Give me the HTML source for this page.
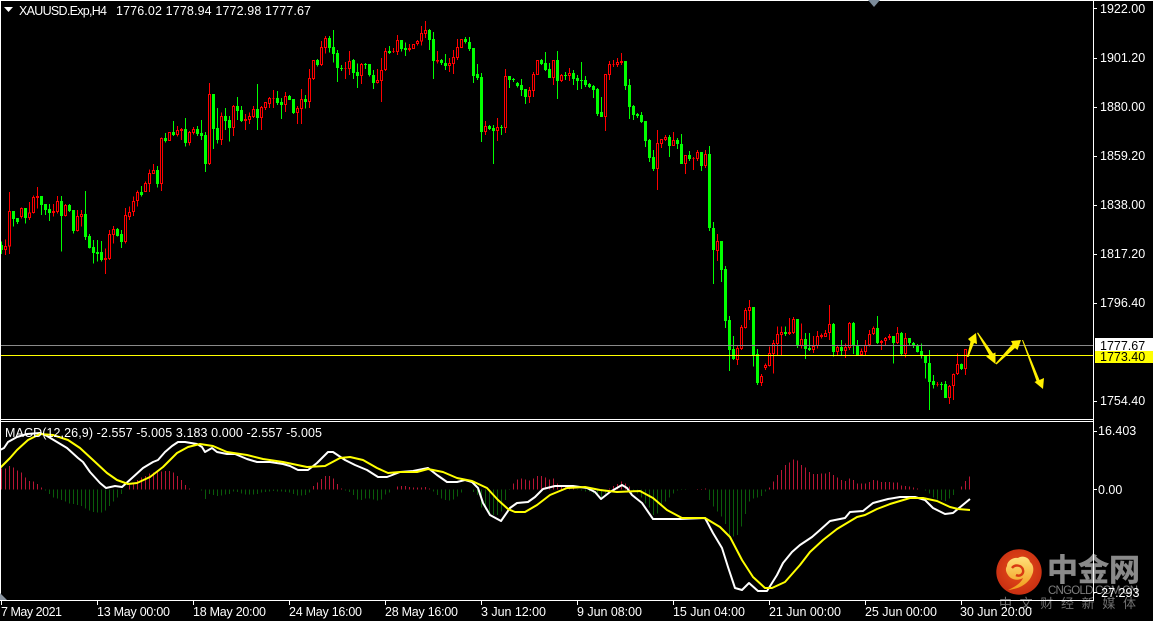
<!DOCTYPE html>
<html><head><meta charset="utf-8"><title>XAUUSD</title>
<style>
html,body{margin:0;padding:0;background:#000;width:1153px;height:621px;overflow:hidden}
svg{display:block}
text{font-family:"Liberation Sans","Noto Sans CJK SC",sans-serif;font-size:12.5px;fill:#fff}
</style></head>
<body>
<svg width="1153" height="621" viewBox="0 0 1153 621" xmlns="http://www.w3.org/2000/svg">
<defs>
<radialGradient id="lg" cx="50%" cy="45%" r="55%"><stop offset="0" stop-color="#e8501a"/><stop offset="1" stop-color="#c92f12"/></radialGradient>
<linearGradient id="ly" x1="0" y1="0" x2="0" y2="1"><stop offset="0" stop-color="#ffe07a"/><stop offset="1" stop-color="#f09a18"/></linearGradient>
</defs>
<rect width="1153" height="621" fill="#000"/>
<g transform="scale(.33333)" shape-rendering="crispEdges" fill="none">
<path stroke="#0f0" stroke-width="3" d="M4.5 725V762M40.5 633V680M52.5 654V672M76.5 624V670M124.5 588V645M136.5 612V645M148.5 612V663M184.5 588V755M208.5 612V636M220.5 630V700M256.5 573V720M268.5 702V745M280.5 720V790M292.5 720V785M304.5 723V785M352.5 684V710M364.5 690V744M424.5 558V590M472.5 498V563M496.5 399V428M520.5 363V408M556.5 354V440M592.5 378V408M604.5 360V420M616.5 396V516M640.5 282V447M652.5 324V430M676.5 324V390M688.5 348V425M712.5 291V360M724.5 318V366M772.5 252V390M832.5 273V315M844.5 294V357M868.5 285V300M880.5 297V342M916.5 285V325M952.5 177V200M988.5 108V158M1000.5 90V188M1012.5 150V246M1024.5 195V213M1060.5 177V237M1072.5 190V264M1096.5 189V207M1108.5 192V230M1120.5 210V267M1168.5 138V162M1204.5 120V155M1216.5 128V168M1288.5 87V150M1300.5 96V237M1324.5 177V195M1336.5 162V210M1396.5 111V130M1408.5 111V153M1420.5 144V249M1432.5 192V240M1444.5 219V426M1468.5 375V390M1480.5 375V492M1504.5 375V405M1528.5 228V264M1540.5 234V246M1552.5 246V262M1564.5 237V288M1576.5 267V312M1624.5 177V195M1636.5 156V213M1648.5 189V234M1672.5 153V297M1696.5 216V240M1720.5 210V255M1732.5 225V270M1744.5 186V267M1756.5 228V261M1768.5 249V264M1780.5 255V294M1792.5 264V348M1804.5 291V351M1876.5 183V270M1888.5 237V357M1900.5 315V360M1912.5 339V354M1924.5 336V369M1936.5 363V441M1948.5 417V486M1960.5 450V513M2008.5 405V471M2032.5 414V447M2044.5 402V492M2068.5 453V483M2104.5 456V513M2128.5 438V693M2140.5 666V852M2164.5 723V846M2176.5 798V984M2188.5 948V1113M2200.5 1008V1080M2260.5 921V1100M2272.5 1047V1155M2356.5 980V1008M2392.5 957V1044M2416.5 999V1077M2428.5 999V1053M2500.5 969V1070M2524.5 1020V1068M2560.5 966V1062M2572.5 1020V1068M2632.5 948V1032M2680.5 1008V1090M2704.5 996V1065M2728.5 1014V1038M2740.5 1026V1044M2752.5 1032V1058M2764.5 1030V1076M2776.5 1065V1135M2788.5 1050V1230M2800.5 1125V1165M2824.5 1146V1170M2836.5 1143V1194M2884.5 1090V1110"/>
<path stroke="#0f0" stroke-width="9" d="M4.5 735V750M40.5 633V657M52.5 654V666M76.5 624V654M124.5 588V615M136.5 612V630M148.5 627V639M184.5 603V648M208.5 615V633M220.5 630V693M256.5 642V711M268.5 708V744M280.5 741V759M292.5 756V762M304.5 756V780M352.5 687V708M364.5 702V726M424.5 576V585M472.5 510V552M496.5 414V423M520.5 396V405M556.5 387V429M592.5 387V402M604.5 399V408M616.5 405V492M640.5 282V387M652.5 384V420M676.5 348V363M688.5 360V384M712.5 318V333M724.5 330V363M772.5 327V354M832.5 294V309M844.5 306V315M868.5 288V300M880.5 297V339M916.5 297V306M952.5 180V195M988.5 114V144M1000.5 141V162M1012.5 159V204M1024.5 204V207M1060.5 180V219M1072.5 216V228M1096.5 192V195M1108.5 192V225M1120.5 225V249M1168.5 153V159M1204.5 120V147M1216.5 144V150M1288.5 90V120M1300.5 117V183M1324.5 180V189M1336.5 189V198M1396.5 117V126M1408.5 126V147M1420.5 144V228M1432.5 222V234M1444.5 231V396M1468.5 378V387M1480.5 384V393M1504.5 381V384M1528.5 228V240M1540.5 237V240M1552.5 249V258M1564.5 255V270M1576.5 267V291M1624.5 180V192M1636.5 189V210M1648.5 207V234M1672.5 180V243M1696.5 225V228M1720.5 219V237M1732.5 234V243M1744.5 240V243M1756.5 240V255M1768.5 252V261M1780.5 258V270M1792.5 267V342M1804.5 336V351M1876.5 183V258M1888.5 255V321M1900.5 318V345M1912.5 342V348M1924.5 345V366M1936.5 363V423M1948.5 420V474M1960.5 471V507M2008.5 411V438M2032.5 420V432M2044.5 432V492M2068.5 465V477M2104.5 456V498M2128.5 462V684M2140.5 684V750M2164.5 723V810M2176.5 807V963M2188.5 960V1050M2200.5 1047V1077M2260.5 921V1065M2272.5 1062V1149M2356.5 996V1002M2392.5 957V1038M2416.5 1017V1047M2428.5 1044V1050M2500.5 972V1056M2524.5 1041V1053M2560.5 969V1038M2572.5 1035V1065M2632.5 984V1029M2680.5 1008V1029M2704.5 999V1062M2728.5 1014V1029M2740.5 1029V1038M2752.5 1035V1056M2764.5 1053V1068M2776.5 1068V1089M2788.5 1089V1146M2800.5 1143V1155M2824.5 1152V1155M2836.5 1152V1194M2884.5 1092V1107"/>
<path stroke="#f00" stroke-width="3" d="M16.5 718V765M28.5 576V762M64.5 622V655M88.5 606V660M100.5 586V640M112.5 561V625M160.5 612V650M172.5 588V640M196.5 612V650M232.5 630V695M244.5 630V680M316.5 745V822M328.5 690V780M340.5 678V730M376.5 624V730M388.5 620V660M400.5 590V648M412.5 572V620M436.5 545V576M448.5 508V576M460.5 492V522M484.5 413V573M508.5 396V423M532.5 378V410M544.5 384V420M568.5 393V436M580.5 381V403M628.5 249V495M664.5 337V435M700.5 315V408M736.5 342V390M748.5 338V372M760.5 318V354M784.5 318V390M796.5 306V330M808.5 291V324M820.5 270V324M856.5 276V336M892.5 318V372M904.5 267V372M928.5 207V324M940.5 180V240M964.5 123V198M976.5 108V160M1036.5 186V237M1048.5 153V225M1084.5 189V252M1132.5 207V250M1144.5 174V306M1156.5 144V213M1180.5 144V159M1192.5 105V165M1228.5 132V155M1240.5 132V147M1252.5 120V137M1264.5 78V137M1276.5 63V114M1312.5 153V190M1348.5 174V216M1360.5 150V222M1372.5 117V180M1384.5 117V144M1456.5 363V405M1492.5 354V423M1516.5 207V399M1588.5 261V309M1600.5 216V291M1612.5 180V225M1660.5 180V255M1684.5 222V246M1708.5 204V243M1816.5 222V393M1828.5 183V240M1840.5 180V201M1852.5 174V201M1864.5 159V195M1972.5 390V570M1984.5 417V444M1996.5 405V423M2020.5 396V438M2056.5 465V522M2080.5 471V510M2092.5 450V483M2116.5 450V504M2152.5 702V783M2212.5 1038V1095M2224.5 975V1050M2236.5 924V985M2248.5 900V960M2284.5 1122V1158M2296.5 1090V1110M2308.5 1040V1100M2320.5 1020V1120M2332.5 980V1065M2344.5 980V1068M2368.5 954V1005M2380.5 951V1002M2404.5 970V1045M2440.5 1008V1059M2452.5 993V1045M2464.5 1000V1015M2476.5 990V1010M2488.5 915V1020M2512.5 1035V1065M2536.5 1030V1074M2548.5 966V1050M2584.5 1045V1068M2596.5 1020V1065M2608.5 990V1040M2620.5 980V1005M2644.5 1020V1050M2656.5 1011V1035M2668.5 1002V1020M2692.5 981V1032M2716.5 999V1072M2812.5 1146V1160M2848.5 1155V1212M2860.5 1120V1200M2872.5 1060V1125M2896.5 1047V1125"/>
<path stroke="#f00" stroke-width="3" fill="#000" d="M13.5 739.5h6v9h-6zM25.5 634.5h6v104h-6zM61.5 625.5h6v24h-6zM85.5 638.5h6v14h-6zM97.5 592.5h6v45h-6zM109.5 589.5h6v3h-6zM157.5 634.5h6v3h-6zM169.5 604.5h6v30h-6zM193.5 616.5h6v30h-6zM229.5 649.5h6v42h-6zM241.5 643.5h6v6h-6zM313.5 775.5h6v3h-6zM325.5 703.5h6v72h-6zM337.5 688.5h6v15h-6zM373.5 646.5h6v78h-6zM385.5 637.5h6v12h-6zM397.5 604.5h6v30h-6zM409.5 577.5h6v24h-6zM433.5 550.5h6v24h-6zM445.5 520.5h6v30h-6zM457.5 511.5h6v9h-6zM481.5 415.5h6v135h-6zM505.5 397.5h6v24h-6zM529.5 391.5h6v12h-6zM541.5 388.5h6v3h-6zM565.5 397.5h6v30h-6zM577.5 388.5h6v9h-6zM625.5 283.5h6v207h-6zM661.5 349.5h6v69h-6zM697.5 319.5h6v63h-6zM733.5 358.5h6v3h-6zM745.5 349.5h6v9h-6zM757.5 328.5h6v21h-6zM781.5 322.5h6v30h-6zM793.5 307.5h6v15h-6zM805.5 295.5h6v15h-6zM817.5 295.5h6v0h-6zM853.5 289.5h6v24h-6zM889.5 325.5h6v12h-6zM901.5 298.5h6v27h-6zM925.5 235.5h6v69h-6zM937.5 181.5h6v54h-6zM961.5 142.5h6v51h-6zM973.5 115.5h6v27h-6zM1033.5 205.5h6v0h-6zM1045.5 184.5h6v21h-6zM1081.5 193.5h6v33h-6zM1129.5 241.5h6v6h-6zM1141.5 211.5h6v30h-6zM1153.5 154.5h6v54h-6zM1177.5 154.5h6v0h-6zM1189.5 121.5h6v33h-6zM1225.5 145.5h6v3h-6zM1237.5 133.5h6v12h-6zM1249.5 124.5h6v6h-6zM1261.5 100.5h6v23h-6zM1273.5 91.5h6v9h-6zM1309.5 181.5h6v1h-6zM1345.5 190.5h6v6h-6zM1357.5 172.5h6v18h-6zM1369.5 142.5h6v30h-6zM1381.5 118.5h6v24h-6zM1453.5 379.5h6v15h-6zM1489.5 382.5h6v9h-6zM1513.5 229.5h6v153h-6zM1585.5 271.5h6v18h-6zM1597.5 223.5h6v48h-6zM1609.5 181.5h6v42h-6zM1657.5 181.5h6v51h-6zM1681.5 226.5h6v15h-6zM1705.5 220.5h6v6h-6zM1813.5 223.5h6v126h-6zM1825.5 193.5h6v30h-6zM1837.5 193.5h6v0h-6zM1849.5 187.5h6v6h-6zM1861.5 184.5h6v3h-6zM1969.5 430.5h6v75h-6zM1981.5 418.5h6v12h-6zM1993.5 412.5h6v6h-6zM2017.5 421.5h6v15h-6zM2053.5 466.5h6v24h-6zM2077.5 475.5h6v0h-6zM2089.5 457.5h6v18h-6zM2113.5 463.5h6v33h-6zM2149.5 724.5h6v27h-6zM2209.5 1045.5h6v33h-6zM2221.5 982.5h6v63h-6zM2233.5 931.5h6v51h-6zM2245.5 922.5h6v9h-6zM2281.5 1129.5h6v18h-6zM2293.5 1096.5h6v6h-6zM2305.5 1060.5h6v36h-6zM2317.5 1030.5h6v30h-6zM2329.5 1003.5h6v27h-6zM2341.5 997.5h6v6h-6zM2365.5 997.5h6v3h-6zM2377.5 958.5h6v39h-6zM2401.5 1018.5h6v18h-6zM2437.5 1039.5h6v9h-6zM2449.5 1009.5h6v27h-6zM2461.5 1006.5h6v3h-6zM2473.5 1000.5h6v9h-6zM2485.5 973.5h6v24h-6zM2509.5 1042.5h6v12h-6zM2533.5 1042.5h6v9h-6zM2545.5 970.5h6v72h-6zM2581.5 1054.5h6v9h-6zM2593.5 1036.5h6v18h-6zM2605.5 1003.5h6v30h-6zM2617.5 985.5h6v15h-6zM2641.5 1024.5h6v3h-6zM2653.5 1015.5h6v6h-6zM2665.5 1009.5h6v3h-6zM2689.5 1000.5h6v27h-6zM2713.5 1015.5h6v45h-6zM2809.5 1153.5h6v0h-6zM2845.5 1159.5h6v33h-6zM2857.5 1123.5h6v33h-6zM2869.5 1093.5h6v27h-6zM2893.5 1048.5h6v57h-6z"/>
</g>
<rect x="0" y="345" width="1093" height="1" fill="#8a8a8a"/>
<rect x="0" y="355" width="1093" height="1" fill="#ffff00"/>
<g fill="#ffef00">
<polygon points="967,357 968.5,357 974,343 977,344 976,333 968,339 970.5,341.5"/>
<polygon points="977,333 978,332.5 993,353.5 995.5,352.5 995.5,364 986,356.5 989.5,355.5"/>
<polygon points="995.5,363.5 996.5,364.5 1015,348 1017.5,350 1021,340 1011,341 1012.5,344"/>
<polygon points="1022,340 1023,340 1039.5,380 1044,378 1043,389 1034.5,382 1036.5,381"/>
</g>
<g transform="scale(.33333) translate(0,1260)" shape-rendering="crispEdges" fill="none" stroke-width="3">
<path stroke="#b81535" d="M4.5 208V145M16.5 208V145M28.5 208V138M40.5 208V142M52.5 208V152M64.5 208V158M76.5 208V172M88.5 208V183M100.5 208V185M112.5 208V192M124.5 208V202M388.5 208V195M400.5 208V190M412.5 208V180M424.5 208V172M436.5 208V168M448.5 208V160M460.5 208V158M472.5 208V155M484.5 208V155M496.5 208V153M508.5 208V153M520.5 208V158M532.5 208V168M544.5 208V180M556.5 208V195M568.5 208V205M940.5 208V198M952.5 208V188M964.5 208V177M976.5 208V168M988.5 208V168M1000.5 208V175M1012.5 208V192M1024.5 208V205M1192.5 208V200M1204.5 208V198M1216.5 208V198M1228.5 208V201M1240.5 208V202M1252.5 208V203M1264.5 208V202M1276.5 208V201M1288.5 208V205M1540.5 208V190M1552.5 208V178M1564.5 208V175M1576.5 208V178M1588.5 208V182M1600.5 208V175M1612.5 208V168M1624.5 208V168M1636.5 208V172M1648.5 208V178M1660.5 208V175M1672.5 208V190M1684.5 208V195M1696.5 208V198M1708.5 208V200M1720.5 208V203M1828.5 208V205M1840.5 208V198M1852.5 208V192M1864.5 208V185M1876.5 208V190M1888.5 208V200M2092.5 208V207M2104.5 208V207M2116.5 208V206M2308.5 208V203M2320.5 208V185M2332.5 208V165M2344.5 208V150M2356.5 208V135M2368.5 208V128M2380.5 208V118M2392.5 208V122M2404.5 208V135M2416.5 208V142M2428.5 208V156M2440.5 208V162M2452.5 208V162M2464.5 208V160M2476.5 208V160M2488.5 208V156M2500.5 208V165M2512.5 208V172M2524.5 208V180M2536.5 208V183M2548.5 208V175M2560.5 208V180M2572.5 208V190M2584.5 208V190M2596.5 208V190M2608.5 208V186M2620.5 208V180M2632.5 208V182M2644.5 208V186M2656.5 208V186M2668.5 208V186M2680.5 208V188M2692.5 208V188M2704.5 208V196M2716.5 208V198M2728.5 208V200M2740.5 208V203M2752.5 208V205M2884.5 208V200M2896.5 208V183M2908.5 208V170"/>
<path stroke="#0a5c0a" d="M136.5 208V212M148.5 208V222M160.5 208V232M172.5 208V235M184.5 208V240M196.5 208V245M208.5 208V250M220.5 208V252M232.5 208V255M244.5 208V258M256.5 208V265M268.5 208V272M280.5 208V276M292.5 208V278M304.5 208V277M316.5 208V272M328.5 208V258M340.5 208V245M352.5 208V232M364.5 208V222M604.5 208V212M616.5 208V237M628.5 208V222M640.5 208V225M652.5 208V228M664.5 208V226M676.5 208V224M688.5 208V222M700.5 208V215M712.5 208V216M724.5 208V220M736.5 208V224M748.5 208V224M760.5 208V224M772.5 208V222M784.5 208V218M796.5 208V216M808.5 208V214M820.5 208V213M832.5 208V214M844.5 208V215M856.5 208V216M868.5 208V218M880.5 208V222M892.5 208V226M904.5 208V226M916.5 208V225M928.5 208V218M1036.5 208V212M1048.5 208V216M1060.5 208V225M1072.5 208V238M1084.5 208V240M1096.5 208V236M1108.5 208V236M1120.5 208V238M1132.5 208V242M1144.5 208V238M1156.5 208V224M1168.5 208V218M1300.5 208V215M1312.5 208V225M1324.5 208V235M1336.5 208V240M1348.5 208V242M1360.5 208V238M1372.5 208V230M1384.5 208V218M1420.5 208V216M1432.5 208V225M1444.5 208V262M1456.5 208V268M1468.5 208V280M1480.5 208V285M1492.5 208V285M1504.5 208V275M1516.5 208V240M1528.5 208V210M1732.5 208V210M1744.5 208V212M1756.5 208V215M1768.5 208V215M1780.5 208V220M1792.5 208V225M1804.5 208V235M1816.5 208V222M1900.5 208V212M1912.5 208V220M1924.5 208V232M1936.5 208V250M1948.5 208V262M1960.5 208V285M1972.5 208V280M1984.5 208V258M1996.5 208V245M2008.5 208V232M2020.5 208V220M2032.5 208V212M2044.5 208V210M2056.5 208V210M2068.5 208V209M2128.5 208V240M2140.5 208V260M2152.5 208V275M2164.5 208V290M2176.5 208V312M2188.5 208V345M2200.5 208V350M2212.5 208V345M2224.5 208V320M2236.5 208V282M2248.5 208V245M2260.5 208V235M2272.5 208V232M2284.5 208V228M2296.5 208V215M2776.5 208V212M2788.5 208V220M2800.5 208V232M2812.5 208V238M2824.5 208V240M2836.5 208V243M2848.5 208V235M2860.5 208V225"/>
</g>
<polyline fill="none" stroke="#fff" stroke-width="2" stroke-linejoin="round" points="0,450 4,448 8,442 17,437 27,434 40,433 47,436 57,442 67,448 78,458 83,462 90,472 100,483 106,488 115,486 122,487 132,478 143,468 153,462 158,460 165,452 172,446 178,442 185,442 197,444 202,447 205,452 212,448 217,452 227,454 235,454 247,459 257,462 270,462 283,464 290,466 298,470 308,470 317,463 328,452 333,452 345,460 355,465 367,470 378,477 387,477 400,472 413,471 428,468 437,475 447,482 457,482 465,480 472,482 478,488 483,503 490,515 501,521 510,508 517,503 528,502 535,497 543,489 555,486 573,486 587,488 595,492 601,499 610,492 622,485 627,488 632,495 642,503 653,519 673,519 680,519 705,518 713,533 722,548 728,567 735,588 742,590 749,583 758,591 767,591 777,575 783,563 792,552 800,545 812,537 820,530 830,521 845,518 850,512 863,511 873,503 888,499 900,497 915,497 925,500 933,508 945,514 953,513 970,499"/>
<polyline fill="none" stroke="#ff0" stroke-width="2" stroke-linejoin="round" points="0,468 10,458 17,450 28,440 40,434 53,435 68,440 80,448 93,460 107,473 117,480 128,484 137,483 150,477 163,467 177,453 188,447 200,444 213,446 227,452 247,455 263,459 283,462 307,467 325,466 340,458 350,457 363,460 377,468 388,473 400,472 417,472 428,469 443,472 457,478 472,481 487,488 498,500 508,509 515,512 525,512 537,505 550,495 567,488 585,487 600,490 617,492 640,491 653,498 667,510 682,518 705,518 720,527 730,537 742,560 753,577 765,588 772,588 785,582 800,565 810,552 823,540 837,529 857,517 865,515 877,509 890,504 910,498 923,498 937,501 950,507 958,509 970,510"/>
<circle cx="1019" cy="572" r="22.7" fill="url(#lg)"/>
<path d="M1007 566c0-5 6-9 11-8c4-3 11-1 12 4c4 3 4 9 2 13c-3 8-12 14-24 15c7-3 13-7 15-12c-5 3-12 2-15-3c-2-3-3-6-1-9z" fill="url(#ly)"/>
<path d="M1012 568c3-4 10-3 11 2c1 4-3 7-7 5" fill="none" stroke="#d83a12" stroke-width="2.4"/>
<text x="1047" y="581" style="font-family:'Noto Sans CJK SC',sans-serif;font-size:31px;font-weight:700;fill:#8a8a8a;stroke:#8a8a8a;stroke-width:.5">中金网</text>
<text x="1048" y="594" textLength="90" style="font-size:11.5px;fill:#7d7d7d">CNGOLD.COM.CN</text>
<text x="999" y="608" textLength="137" style="font-family:'Noto Sans CJK SC',sans-serif;font-size:13px;fill:#707070">中文财经新媒体</text>
<g fill="#fff" shape-rendering="crispEdges">
<rect x="0" y="0" width="1153" height="1" />
<rect x="1093" y="0" width="1" height="601"/>
<rect x="0" y="0" width="1" height="601"/>
<rect x="0" y="419" width="1094" height="1"/>
<rect x="0" y="421" width="1094" height="1"/>
<rect x="0" y="600" width="1094" height="1"/>
<path d="M1093 8h4v1h-4zM1093 58h4v1h-4zM1093 107h4v1h-4zM1093 156h4v1h-4zM1093 205h4v1h-4zM1093 254h4v1h-4zM1093 303h4v1h-4zM1093 401h4v1h-4zM1093 431h4v1h-4zM1093 489h4v1h-4zM1093 592h4v1h-4zM1 601h1v4h-1zM97 601h1v4h-1zM193 601h1v4h-1zM289 601h1v4h-1zM385 601h1v4h-1zM481 601h1v4h-1zM577 601h1v4h-1zM673 601h1v4h-1zM769 601h1v4h-1zM865 601h1v4h-1zM961 601h1v4h-1z"/>
</g>
<polygon points="868,0 880,0 874,7" fill="#7b8a99"/>
<polygon points="0,593 7,600 0,600" fill="#8a94a0"/>
<polygon points="4,7 13,7 8.5,12" fill="#fff"/>
<text x="19" y="15" textLength="88">XAUUSD.Exp,H4</text>
<text x="116" y="15" textLength="195">1776.02 1778.94 1772.98 1777.67</text>
<text x="5" y="437" textLength="317">MACD(12,26,9) -2.557 -5.005 3.183 0.000 -2.557 -5.005</text>
<text x="1100" y="13">1922.00</text>
<text x="1100" y="62">1901.20</text>
<text x="1100" y="111">1880.00</text>
<text x="1100" y="160">1859.20</text>
<text x="1100" y="209">1838.00</text>
<text x="1100" y="258">1817.20</text>
<text x="1100" y="307">1796.40</text>
<text x="1100" y="405">1754.40</text>
<rect x="1095" y="338" width="58" height="13" fill="#fff"/>
<rect x="1095" y="351" width="58" height="12" fill="#ff0"/>
<text x="1100" y="350" style="fill:#000">1777.67</text>
<text x="1100" y="361" style="fill:#000">1773.40</text>
<text x="1098" y="435">16.403</text>
<text x="1098" y="494">0.00</text>
<text x="1097" y="597">-27.293</text>
<text x="1" y="616" textLength="61">7 May 2021</text>
<text x="97" y="616" textLength="73">13 May 00:00</text>
<text x="193" y="616" textLength="73">18 May 20:00</text>
<text x="289" y="616" textLength="73">24 May 16:00</text>
<text x="385" y="616" textLength="73">28 May 16:00</text>
<text x="481" y="616" textLength="65">3 Jun 12:00</text>
<text x="577" y="616" textLength="65">9 Jun 08:00</text>
<text x="673" y="616" textLength="72">15 Jun 04:00</text>
<text x="769" y="616" textLength="72">21 Jun 00:00</text>
<text x="865" y="616" textLength="72">25 Jun 00:00</text>
<text x="960" y="616" textLength="72">30 Jun 20:00</text>
</svg>
</body></html>
